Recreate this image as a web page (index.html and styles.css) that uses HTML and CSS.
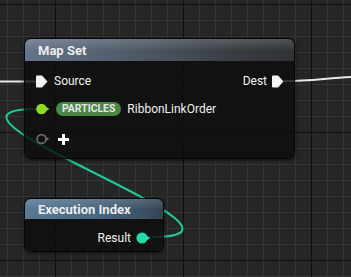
FILE: index.html
```html
<!DOCTYPE html>
<html lang="en">
<head>
    <meta charset="UTF-8">
    <title>Map Set</title>
    <link rel="stylesheet" href="styles.css">
</head>
<body>
    <div class="graph">
        <!-- wires sit under the nodes -->
        <svg class="wires" width="351" height="277" viewBox="0 0 351 277">
            <path class="wire-exec" d="M0 81.5 L36 81.5" />
            <path class="wire-exec" d="M284 81 C312 81 326 78 351 77" />
            <path class="wire-int" d="M152 237 C292 237 -103 109 37 109" />
        </svg>

        <div class="node node-mapset">
            <div class="node-header header-grey">Map Set</div>
            <div class="node-body">
                <div class="row">
                    <div class="pin-side">
                        <svg class="pin" width="12" height="13" viewBox="0 0 12 13"><path class="exec" d="M0 1.5 Q0 0.5 1 0.5 H6 L11.5 6.5 L6 12.5 H1 Q0 12.5 0 11.5 Z" /></svg>
                        <span class="label">Source</span>
                    </div>
                    <div class="pin-side">
                        <span class="label">Dest</span>
                        <svg class="pin" width="12" height="13" viewBox="0 0 12 13"><path class="exec" d="M0 1.5 Q0 0.5 1 0.5 H6 L11.5 6.5 L6 12.5 H1 Q0 12.5 0 11.5 Z" /></svg>
                    </div>
                </div>
                <div class="row">
                    <div class="pin-side">
                        <svg class="pin" width="14" height="12" viewBox="0 0 14 12"><circle class="dot-lime" cx="5.5" cy="6" r="5.3" /><path class="dot-lime" d="M10 4 L13.5 6 L10 8 Z" /></svg>
                        <span class="badge">PARTICLES</span>
                        <span class="label">RibbonLinkOrder</span>
                    </div>
                </div>
                <div class="row row-add">
                    <div class="pin-side">
                        <svg class="pin" width="14" height="12" viewBox="0 0 14 12"><circle class="dot-empty" cx="5.5" cy="6" r="4.4" /><path class="dot-grey" d="M10 4 L13.5 6 L10 8 Z" /></svg>
                        <svg class="plus" width="11" height="11" viewBox="0 0 11 11"><path d="M4 0 H7 V4 H11 V7 H7 V11 H4 V7 H0 V4 H4 Z" /></svg>
                    </div>
                </div>
            </div>
        </div>

        <div class="node node-index">
            <div class="node-header header-blue">Execution Index</div>
            <div class="node-body">
                <div class="row row-right">
                    <div class="pin-side">
                        <span class="label">Result</span>
                        <svg class="pin" width="15" height="12" viewBox="0 0 15 12"><circle class="dot-teal" cx="6" cy="6" r="5.6" /><path class="dot-teal" d="M11 4 L14.5 6 L11 8 Z" /></svg>
                    </div>
                </div>
            </div>
        </div>
    </div>
</body>
</html>
```

FILE: styles.css
```css
body {
    margin: 0;
    padding: 0;
    background: #262626;
    font-family: Roboto, "Liberation Sans", sans-serif;
}

.graph {
    position: relative;
    width: 351px;
    height: 277px;
    overflow: hidden;
    background-color: #262626;
    background-image:
        linear-gradient(90deg, #0f0f0f 1px, transparent 1px),
        linear-gradient(#0f0f0f 1px, transparent 1px),
        linear-gradient(90deg, #353535 1px, transparent 1px),
        linear-gradient(#353535 1px, transparent 1px);
    background-size: 128px 100%, 100% 128px, 16px 100%, 100% 16px;
    background-position: 55px 0, 0 4px, 7px 0, 0 4px;
}

.wires {
    position: absolute;
    left: 0;
    top: 0;
}

.wire-exec {
    fill: none;
    stroke: #e8e8e8;
    stroke-width: 2;
}

.wire-int {
    fill: none;
    stroke: #1fc99c;
    stroke-width: 2;
}

.node {
    position: absolute;
    display: flex;
    flex-direction: column;
    border: 1px solid #050505;
    border-radius: 7px;
    overflow: hidden;
    box-shadow: 0 1px 4px rgba(0, 0, 0, 0.6);
    color: #f2f2f2;
}

.node-mapset {
    left: 24px;
    top: 38px;
    width: 269px;
    height: 119px;
}

.node-index {
    left: 24px;
    top: 198px;
    width: 138px;
    height: 52px;
}

.node-header {
    height: 22px;
    flex: none;
    display: flex;
    align-items: center;
    padding-left: 13px;
    font-size: 13px;
    font-weight: bold;
    color: #ececec;
    border-bottom: 1px solid #111;
}

.header-grey {
    background:
        linear-gradient(180deg, rgba(255, 255, 255, 0.16), rgba(255, 255, 255, 0) 55%),
        linear-gradient(90deg, #64748a, #4d5762 45%, #383b40 80%, #303234);
}

.header-blue {
    height: 20px;
    background:
        linear-gradient(180deg, rgba(255, 255, 255, 0.14), rgba(255, 255, 255, 0) 55%),
        linear-gradient(90deg, #587a97, #4a6680 50%, #3c5266 85%, #34434f);
}

.node-body {
    flex: 1;
    background: rgba(12, 14, 12, 0.82);
    padding: 5px 10px 0 11px;
}

.row {
    height: 28px;
    display: flex;
    align-items: center;
    justify-content: space-between;
}

.row-add {
    margin-top: 2px;
}

.row-right {
    height: 26px;
    justify-content: flex-end;
    padding-right: 2px;
}

.pin-side {
    display: flex;
    align-items: center;
}

.pin {
    display: block;
}

.exec {
    fill: #f4f4f4;
}

.dot-lime {
    fill: #8fdb2c;
}

.dot-teal {
    fill: #25d9a9;
}

.dot-empty {
    fill: none;
    stroke: #6a6a6a;
    stroke-width: 1.6;
}

.dot-grey {
    fill: #6a6a6a;
}

.label {
    font-size: 12px;
    color: #f0f0f0;
    margin: 0 5px 0 6px;
}

.badge {
    margin-left: 6px;
    height: 14px;
    padding: 0 6px;
    border-radius: 7px;
    background: #4b8647;
    color: #e4e4e4;
    font-size: 10.4px;
    font-weight: bold;
    line-height: 14px;
}

.badge + .label {
    margin-left: 6px;
}

.plus {
    display: block;
    margin-left: 8px;
    fill: #ffffff;
}
```
